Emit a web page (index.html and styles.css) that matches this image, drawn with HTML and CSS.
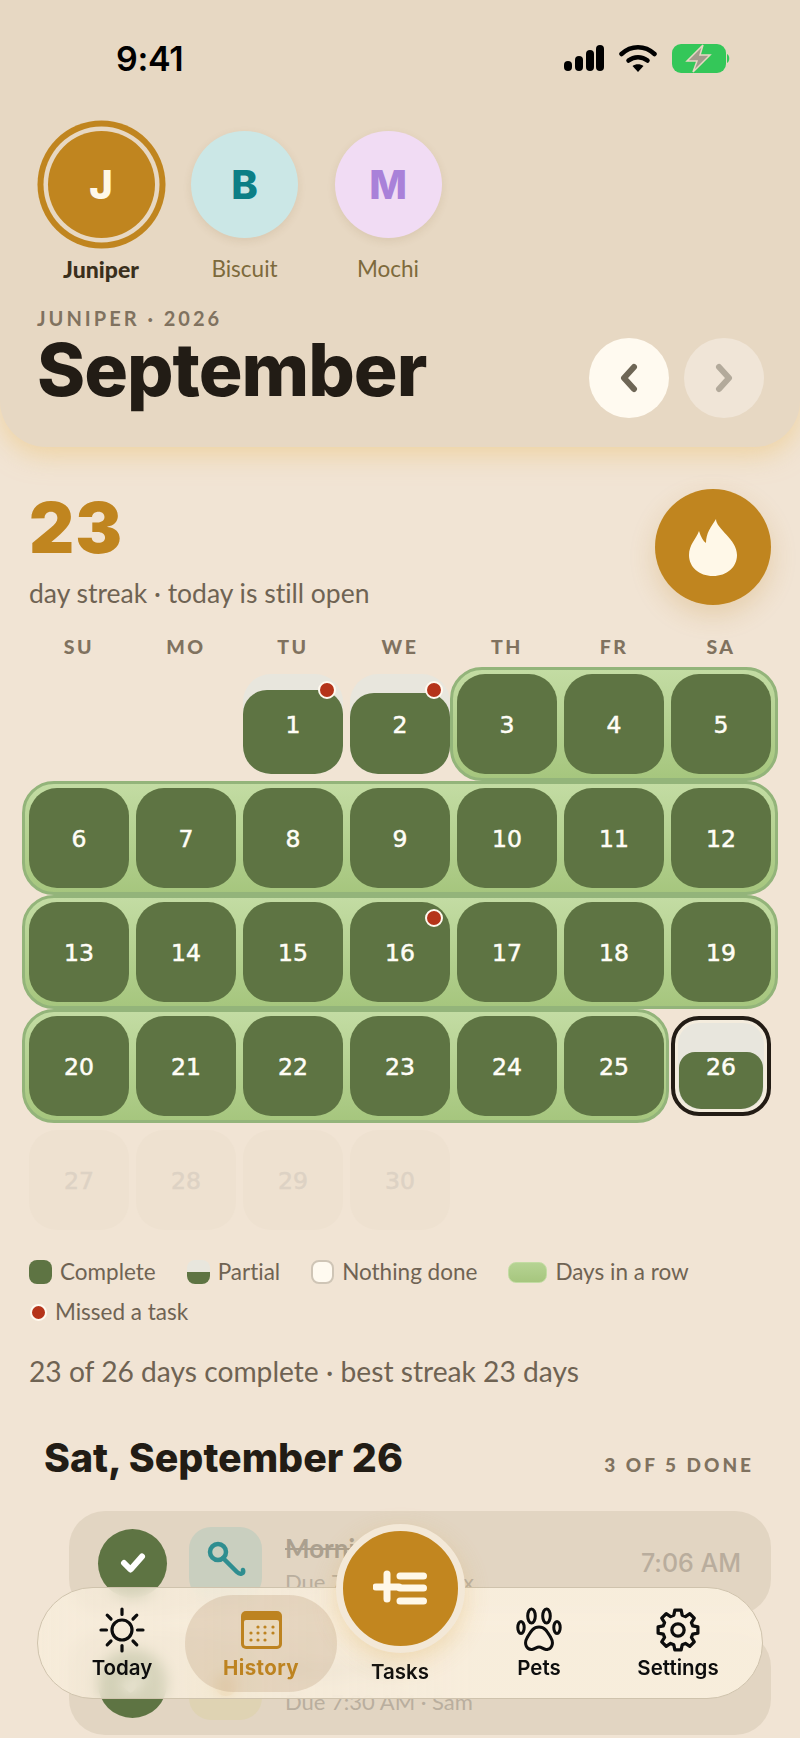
FILE: index.html
```html
<!DOCTYPE html>
<html lang="en">
<head>
    <meta charset="UTF-8">
    <meta name="viewport" content="width=device-width, initial-scale=1.0">
    <title>History</title>
    <link rel="stylesheet" href="styles.css">
</head>
<body>
    <div class="page">
        <header class="top">
            <div class="status-bar">
                <span class="clock">9:41</span>
                <div class="status-icons">
                    <svg width="40" height="26" viewBox="0 0 40 26"><g fill="#000"><rect x="0" y="16" width="8" height="10" rx="4"/><rect x="11" y="11" width="8" height="15" rx="4"/><rect x="22" y="5" width="8" height="21" rx="4"/><rect x="32" y="0" width="8" height="26" rx="4"/></g></svg>
                    <svg width="38" height="28" viewBox="0 0 38 28"><g fill="none" stroke="#000" stroke-width="4.5" stroke-linecap="round"><path d="M2.5 10 C12 1 26 1 35.500 10"/><path d="M9.500 16.500 C15 12 23 12 28.500 16.500"/></g><path d="M19 28 L13.500 22 C16.500 19.500 21.500 19.500 24.500 22 Z" fill="#000"/></svg>
                    <svg width="59" height="29" viewBox="0 0 59 29"><rect x="0" y="0" width="54" height="29" rx="9" fill="#34c759"/><path d="M55 10 C58 11 58 18 55 19 Z" fill="#34c759"/><path d="M31 1 L15 17 H25 L21 28 L38 11 H28 Z" fill="#a29b8c" stroke="#e7d8c3" stroke-width="1.500"/></svg>
                </div>
            </div>

            <div class="pets">
                <div class="pet pet-active">
                    <div class="avatar avatar-juniper">J</div>
                    <span class="pet-name">Juniper</span>
                </div>
                <div class="pet">
                    <div class="avatar avatar-biscuit">B</div>
                    <span class="pet-name">Biscuit</span>
                </div>
                <div class="pet">
                    <div class="avatar avatar-mochi">M</div>
                    <span class="pet-name">Mochi</span>
                </div>
            </div>

            <p class="eyebrow">JUNIPER · 2026</p>
            <div class="month-row">
                <h1 class="month">September</h1>
                <div class="month-nav">
                    <button class="month-btn">
                        <svg width="20" height="30" viewBox="0 0 20 30"><path d="M15 4 L5 15 L15 26" fill="none" stroke="#6e6656" stroke-width="6" stroke-linecap="round" stroke-linejoin="round"/></svg>
                    </button>
                    <button class="month-btn month-btn-off">
                        <svg width="20" height="30" viewBox="0 0 20 30"><path d="M5 4 L15 15 L5 26" fill="none" stroke="#b3aa9b" stroke-width="6" stroke-linecap="round" stroke-linejoin="round"/></svg>
                    </button>
                </div>
            </div>
        </header>

        <main class="content">
            <section class="streak-head">
                <div>
                    <div class="streak-count">23</div>
                    <p class="streak-note">day streak · today is still open</p>
                </div>
                <div class="flame">
                    <svg width="48" height="57" viewBox="0 0 48 57"><path d="M27 0 C27 10 48 20 48 36 C48 48 38 57 24 57 C10 57 0 48 0 36 C0 26 7 20 10 12 C12 18 14 22 17 24 C17 14 22 8 27 0Z" fill="#fff8e8"/></svg>
                </div>
            </section>

            <div class="weekdays">
                <span>SU</span><span>MO</span><span>TU</span><span>WE</span><span>TH</span><span>FR</span><span>SA</span>
            </div>

            <div class="calendar">
                <div class="week">
                    <div class="day day-blank"></div>
                    <div class="day day-blank"></div>
                    <div class="day day-partial fill-tall"><i class="day-fill"></i><b>1</b><i class="miss"></i></div>
                    <div class="day day-partial fill-short"><i class="day-fill"></i><b>2</b><i class="miss"></i></div>
                    <div class="run">
                        <div class="day"><b>3</b></div>
                        <div class="day"><b>4</b></div>
                        <div class="day"><b>5</b></div>
                    </div>
                </div>
                <div class="week">
                    <div class="run">
                        <div class="day"><b>6</b></div>
                        <div class="day"><b>7</b></div>
                        <div class="day"><b>8</b></div>
                        <div class="day"><b>9</b></div>
                        <div class="day"><b>10</b></div>
                        <div class="day"><b>11</b></div>
                        <div class="day"><b>12</b></div>
                    </div>
                </div>
                <div class="week">
                    <div class="run">
                        <div class="day"><b>13</b></div>
                        <div class="day"><b>14</b></div>
                        <div class="day"><b>15</b></div>
                        <div class="day"><b>16</b><i class="miss"></i></div>
                        <div class="day"><b>17</b></div>
                        <div class="day"><b>18</b></div>
                        <div class="day"><b>19</b></div>
                    </div>
                </div>
                <div class="week">
                    <div class="run run-short">
                        <div class="day"><b>20</b></div>
                        <div class="day"><b>21</b></div>
                        <div class="day"><b>22</b></div>
                        <div class="day"><b>23</b></div>
                        <div class="day"><b>24</b></div>
                        <div class="day"><b>25</b></div>
                    </div>
                    <div class="day day-today"><i class="day-fill"></i><b>26</b></div>
                </div>
                <div class="week">
                    <div class="day day-future"><b>27</b></div>
                    <div class="day day-future"><b>28</b></div>
                    <div class="day day-future"><b>29</b></div>
                    <div class="day day-future"><b>30</b></div>
                </div>
            </div>

            <div class="legend">
                <div class="legend-item"><i class="swatch swatch-complete"></i>Complete</div>
                <div class="legend-item"><i class="swatch swatch-partial"></i>Partial</div>
                <div class="legend-item"><i class="swatch swatch-none"></i>Nothing done</div>
                <div class="legend-item"><i class="swatch swatch-run"></i>Days in a row</div>
                <div class="legend-item"><i class="swatch swatch-miss"></i>Missed a task</div>
            </div>

            <p class="stats">23 of 26 days complete · best streak 23 days</p>

            <div class="day-head">
                <h2>Sat, September 26</h2>
                <span>3 OF 5 DONE</span>
            </div>

            <div class="tasks">
                <div class="task">
                    <div class="task-check">
                        <svg width="26" height="22" viewBox="0 0 26 22"><path d="M4 11 L10.500 17.500 L22 4.500" fill="none" stroke="#fff" stroke-width="6" stroke-linecap="round" stroke-linejoin="round"/></svg>
                    </div>
                    <div class="task-icon task-icon-walk">
                        <svg width="40" height="46" viewBox="0 0 40 46"><g fill="none" stroke="#2f8e90" stroke-width="4.500" stroke-linecap="round"><circle cx="12" cy="12" r="8"/><path d="M17 18 L31 32 C34 35 38 34 37 30"/></g></svg>
                    </div>
                    <div class="task-text">
                        <span class="task-title task-done">Morning walk</span>
                        <span class="task-due">Due 7:00 AM · Max</span>
                    </div>
                    <span class="task-time">7:06 AM</span>
                </div>
                <div class="task">
                    <div class="task-check">
                        <svg width="26" height="22" viewBox="0 0 26 22"><path d="M4 11 L10.500 17.500 L22 4.500" fill="none" stroke="#fff" stroke-width="6" stroke-linecap="round" stroke-linejoin="round"/></svg>
                    </div>
                    <div class="task-icon task-icon-food">
                        <svg width="40" height="46" viewBox="0 0 40 46"><circle cx="20" cy="25" r="11" fill="#c2861f"/></svg>
                    </div>
                    <div class="task-text">
                        <span class="task-title task-done">Breakfast</span>
                        <span class="task-due">Due 7:30 AM · Sam</span>
                    </div>
                </div>
            </div>
        </main>

        <nav class="tabbar">
            <a class="tab">
                <svg width="46" height="46" viewBox="0 0 46 46"><g fill="none" stroke="#0d0d0d" stroke-width="3.200" stroke-linecap="round"><circle cx="23" cy="23" r="10"/><path d="M23 2 V7.500 M23 38.500 V44 M2 23 H7.500 M38.500 23 H44 M8.200 8.200 L12 12 M34 34 L37.800 37.800 M37.800 8.200 L34 12 M12 34 L8.200 37.800"/></g></svg>
                <span>Today</span>
            </a>
            <a class="tab tab-active">
                <svg width="41" height="38" viewBox="0 0 41 38"><rect width="41" height="38" rx="5" fill="#bd8320"/><rect x="3" y="9" width="35" height="26" rx="2" fill="#e9d9be"/><g fill="#bd8320"><circle cx="17" cy="16" r="1.600"/><circle cx="24" cy="16" r="1.600"/><circle cx="32" cy="16" r="1.600"/><circle cx="10" cy="22" r="1.600"/><circle cx="17" cy="22" r="1.600"/><circle cx="24" cy="22" r="1.600"/><circle cx="32" cy="22" r="1.600"/><circle cx="10" cy="29" r="1.600"/><circle cx="17" cy="29" r="1.600"/><circle cx="24" cy="29" r="1.600"/></g></svg>
                <span>History</span>
            </a>
            <a class="tab tab-fab">
                <span class="fab">
                    <svg width="55" height="36" viewBox="0 0 55 36"><g fill="none" stroke="#fff8e8" stroke-linecap="round"><path d="M27 6 H50.500 M27 18 H50.500 M27 31 H50.500" stroke-width="7"/><path d="M3 17 H26 M14 4 V29" stroke-width="7"/></g></svg>
                </span>
                <span>Tasks</span>
            </a>
            <a class="tab">
                <svg width="46" height="46" viewBox="0 0 46 46"><g fill="none" stroke="#0d0d0d" stroke-width="3"><ellipse cx="15.500" cy="9" rx="3.800" ry="7"/><ellipse cx="30.500" cy="9" rx="3.800" ry="7"/><ellipse cx="5" cy="20.500" rx="3.200" ry="6"/><ellipse cx="41" cy="20.500" rx="3.200" ry="6"/><path d="M23 20 C16.500 20 14 26 11 31 C8 36 10 43 16 42.500 C19 42 20.500 40 23 40 C25.500 40 27 42 30 42.500 C36 43 38 36 35 31 C32 26 29.500 20 23 20Z"/></g></svg>
                <span>Pets</span>
            </a>
            <a class="tab">
                <svg width="46" height="46" viewBox="0 0 24 24"><g fill="none" stroke="#0d0d0d" stroke-width="1.700" stroke-linejoin="round"><path d="M9.800 4.310 L10.360 1.630 H13.640 L14.200 4.310 L15.880 5 L18.170 3.510 L20.490 5.830 L19 8.120 L19.690 9.800 L22.370 10.360 V13.640 L19.690 14.200 L19 15.880 L20.490 18.170 L18.170 20.490 L15.880 19 L14.200 19.690 L13.640 22.370 H10.360 L9.800 19.690 L8.120 19 L5.830 20.490 L3.510 18.170 L5 15.880 L4.310 14.200 L1.630 13.640 V10.360 L4.310 9.800 L5 8.120 L3.510 5.830 L5.830 3.510 L8.120 5 Z"/><circle cx="12" cy="12" r="3.200"/></g></svg>
                <span>Settings</span>
            </a>
        </nav>
    </div>
</body>
</html>
```

FILE: styles.css
```css
* {
    margin: 0;
    padding: 0;
    box-sizing: border-box;
}

body {
    font-family: 'Lato', 'Liberation Sans', sans-serif;
    font-variant-ligatures: none;
    color: #221c15;
    background: #f1e4d4;
}

.page {
    position: relative;
    width: 800px;
    height: 1738px;
    overflow: hidden;
    background: #f1e4d4;
}

/* Header */
.top {
    height: 447px;
    padding: 0 37px;
    background: #e7d8c3;
    border-radius: 0 0 46px 46px;
    box-shadow: 0 8px 26px rgba(236, 196, 120, 0.55);
}

.status-bar {
    display: flex;
    justify-content: space-between;
    align-items: center;
    height: 120px;
    padding: 0 32px 4px 79px;
}

.clock {
    font-family: 'Inter', sans-serif;
    font-size: 34px;
    font-weight: 600;
    color: #000;
    letter-spacing: -0.3px;
}

.status-icons {
    display: flex;
    align-items: center;
    gap: 15px;
}

.pets {
    display: flex;
    gap: 15.5px;
}

.pet {
    display: flex;
    flex-direction: column;
    align-items: center;
    width: 128px;
}

.avatar {
    display: flex;
    align-items: center;
    justify-content: center;
    width: 107px;
    height: 107px;
    margin: 11px 0 19px;
    border-radius: 50%;
    font-family: 'Inter', sans-serif;
    font-size: 40px;
    font-weight: 800;
    box-shadow: 0 3px 8px rgba(120, 90, 40, 0.12);
}

.avatar-juniper {
    color: #fff8e8;
    background: #c0851f;
    box-shadow: 0 0 0 4.5px #e7d8c3, 0 0 0 10.5px #c0851f;
}

.avatar-biscuit {
    color: #0c7f86;
    background: #cbe7e6;
}

.avatar-mochi {
    color: #a981d9;
    background: #f1dcf4;
}

.pet-name {
    font-size: 22.500px;
    line-height: 24px;
    color: #7d6a3c;
}

.pet-active .pet-name {
    font-size: 23px;
    font-weight: 900;
    color: #3a2f1c;
}

.eyebrow {
    margin-top: 25px;
    font-size: 20px;
    line-height: 24px;
    font-weight: 700;
    letter-spacing: 3px;
    color: #80725f;
}

.month-row {
    display: flex;
    justify-content: space-between;
    margin-top: 8px;
}

.month {
    font-family: 'Inter', sans-serif;
    font-size: 73px;
    line-height: 64px;
    font-weight: 800;
    letter-spacing: -1px;
    color: #221c15;
}

.month-nav {
    display: flex;
    gap: 15px;
    margin-right: -1px;
}

.month-btn {
    display: flex;
    align-items: center;
    justify-content: center;
    width: 80px;
    height: 80px;
    border: none;
    border-radius: 50%;
    background: #fffaf0;
}

.month-btn-off {
    background: #f0e5d7;
}

/* Streak */
.content {
    padding: 42px 29px 0;
}

.streak-head {
    display: flex;
    justify-content: space-between;
    align-items: flex-start;
    height: 116px;
}

.streak-count {
    margin-top: 4px;
    font-family: 'Inter', sans-serif;
    font-size: 70px;
    line-height: 70px;
    font-weight: 900;
    letter-spacing: 1px;
    color: #c0851f;
}

.streak-note {
    margin-top: 14px;
    font-size: 26.500px;
    line-height: 32px;
    color: #6f6353;
}

.flame {
    display: flex;
    align-items: center;
    justify-content: center;
    width: 116px;
    height: 116px;
    border-radius: 50%;
    background: #c0851f;
    box-shadow: 0 10px 26px rgba(192, 133, 31, 0.22);
}

/* Calendar */
.weekdays {
    display: grid;
    grid-template-columns: repeat(7, 100px);
    gap: 7px;
    margin-top: 31px;
    font-size: 19.500px;
    line-height: 22px;
    font-weight: 900;
    letter-spacing: 2.500px;
    text-align: center;
    color: #80725f;
}

.calendar {
    display: flex;
    flex-direction: column;
    gap: 14px;
    margin-top: 16px;
}

.week {
    display: flex;
    gap: 7px;
}

.run {
    display: flex;
    gap: 7px;
    margin: -7px;
    padding: 4px;
    border: 3px solid #93b47a;
    border-radius: 32px;
    background: linear-gradient(#c3dca3, #a6c67e);
}

.run-short {
    margin-right: -5px;
    padding-right: 2px;
}

.day {
    position: relative;
    display: flex;
    align-items: center;
    justify-content: center;
    flex: none;
    width: 100px;
    height: 100px;
    padding-top: 1px;
    border-radius: 28px;
    background: #5e7443;
}

.day b {
    position: relative;
    font-family: 'DejaVu Sans', sans-serif;
    font-size: 23.500px;
    font-weight: 400;
    -webkit-text-stroke: 0.5px currentColor;
    color: #fffdf6;
}

.day-blank {
    background: none;
}

.day-partial {
    background: #e8e6dd;
}

.day-fill {
    position: absolute;
    left: 0;
    right: 0;
    bottom: 0;
    border-radius: 24px 24px 28px 28px;
    background: #5e7443;
}

.fill-tall .day-fill {
    top: 16px;
}

.fill-short .day-fill {
    top: 19px;
}

.miss {
    position: absolute;
    top: 7px;
    right: 7px;
    width: 18px;
    height: 18px;
    border: 2.500px solid #fffaf0;
    border-radius: 50%;
    background: #b5341a;
}

.day-today {
    background: #e8e6dd;
    border: 4px solid #231c15;
    box-shadow: inset 0 0 0 3px #f4ecdd;
}

.day-today .day-fill {
    top: 32px;
    left: 4px;
    right: 4px;
    bottom: 3px;
    border-radius: 16px 16px 22px 22px;
}

.day-future {
    background: #eee1d0;
}

.day-future b {
    color: #ddd2c4;
}

/* Legend */
.legend {
    display: flex;
    flex-wrap: wrap;
    gap: 16px 31px;
    margin-top: 30px;
}

.legend-item {
    display: flex;
    align-items: center;
    gap: 8px;
    font-size: 22.500px;
    line-height: 24px;
    color: #6f6353;
}

.swatch {
    flex: none;
    width: 23px;
    height: 24px;
    border-radius: 8px;
}

.swatch-complete {
    background: #5e7443;
}

.swatch-partial {
    background: linear-gradient(#e8e6dd 50%, #5e7443 50%);
}

.swatch-none {
    background: #fffaf0;
    border: 2px solid #cfc5b6;
}

.swatch-run {
    width: 39px;
    height: 21px;
    background: linear-gradient(#b6d393, #a6c67e);
    border: 1px solid #c3dca3;
}

.swatch-miss {
    width: 17px;
    height: 17px;
    margin: 0 0 0 1px;
    border: 2.500px solid #fffaf0;
    border-radius: 50%;
    background: #b5341a;
}

.stats {
    margin-top: 31px;
    font-size: 28.200px;
    line-height: 32px;
    color: #6f6353;
}

/* Selected day */
.day-head {
    display: flex;
    justify-content: space-between;
    align-items: center;
    margin-top: 49px;
    padding: 0 17px 0 15px;
}

.day-head h2 {
    font-family: 'Inter', sans-serif;
    font-size: 39.300px;
    line-height: 44px;
    font-weight: 800;
    color: #221c15;
}

.day-head span {
    margin-top: 12px;
    font-size: 19px;
    font-weight: 900;
    letter-spacing: 3px;
    color: #80725f;
}

.tasks {
    display: flex;
    flex-direction: column;
    gap: 16px;
    margin: 31px 0 0 40px;
}

.task {
    display: flex;
    align-items: center;
    height: 104px;
    padding: 0 30px 0 29px;
    border-radius: 36px;
    background: #e2d5c2;
}

.task-check {
    display: flex;
    align-items: center;
    justify-content: center;
    flex: none;
    width: 69px;
    height: 69px;
    border-radius: 50%;
    background: #5e7443;
}

.task-icon {
    display: flex;
    align-items: center;
    justify-content: center;
    flex: none;
    width: 73px;
    height: 73px;
    margin: 0 23px 0 22px;
    border-radius: 22px;
}

.task-icon-walk {
    background: #c9cfbf;
}

.task-icon-food {
    background: #dfd3b3;
}

.task-text {
    display: flex;
    flex-direction: column;
    flex: 1;
    gap: 6px;
    padding-top: 2px;
}

.task-title {
    font-size: 26px;
    line-height: 30px;
    font-weight: 700;
    color: #aba08f;
}

.task-done {
    text-decoration: line-through;
}

.task-due {
    font-size: 22px;
    line-height: 26px;
    color: #b9ae9e;
}

.task-time {
    font-family: 'Inter', sans-serif;
    font-size: 25px;
    font-weight: 500;
    color: #b9ad9d;
}

/* Tab bar */
.tabbar {
    position: absolute;
    left: 37px;
    top: 1587px;
    display: grid;
    grid-template-columns: repeat(5, 139px);
    justify-items: center;
    align-items: center;
    width: 726px;
    height: 112px;
    padding: 0 14.500px;
    border: 1px solid #cfc3ad;
    border-radius: 56px;
    background: linear-gradient(90deg, rgba(248, 238, 220, 0.72), rgba(249, 239, 222, 0.92) 60%);
    backdrop-filter: blur(7px);
}

.tab {
    display: flex;
    flex-direction: column;
    align-items: center;
    width: 139px;
    height: 97px;
    padding-top: 12px;
    border-radius: 48px;
    font-family: 'Inter', sans-serif;
    font-size: 20.500px;
    line-height: 30px;
    font-weight: 600;
    color: #0d0d0d;
}

.tab svg {
    flex: none;
}

.tab-active {
    width: 152px;
    padding-top: 16px;
    font-weight: 700;
    letter-spacing: 0.4px;
    color: #bd8320;
    background: rgba(190, 160, 125, 0.3);
}

.tab-active svg {
    margin-bottom: 4px;
}

.tab-fab {
    position: relative;
    padding-top: 62px;
}

.fab {
    position: absolute;
    top: -71px;
    left: 5px;
    display: flex;
    align-items: center;
    justify-content: center;
    width: 129px;
    height: 129px;
    border: 7px solid #f3e8d7;
    border-radius: 50%;
    background: #c2861f;
    box-shadow: 0 8px 24px rgba(220, 170, 80, 0.3);
}
```
